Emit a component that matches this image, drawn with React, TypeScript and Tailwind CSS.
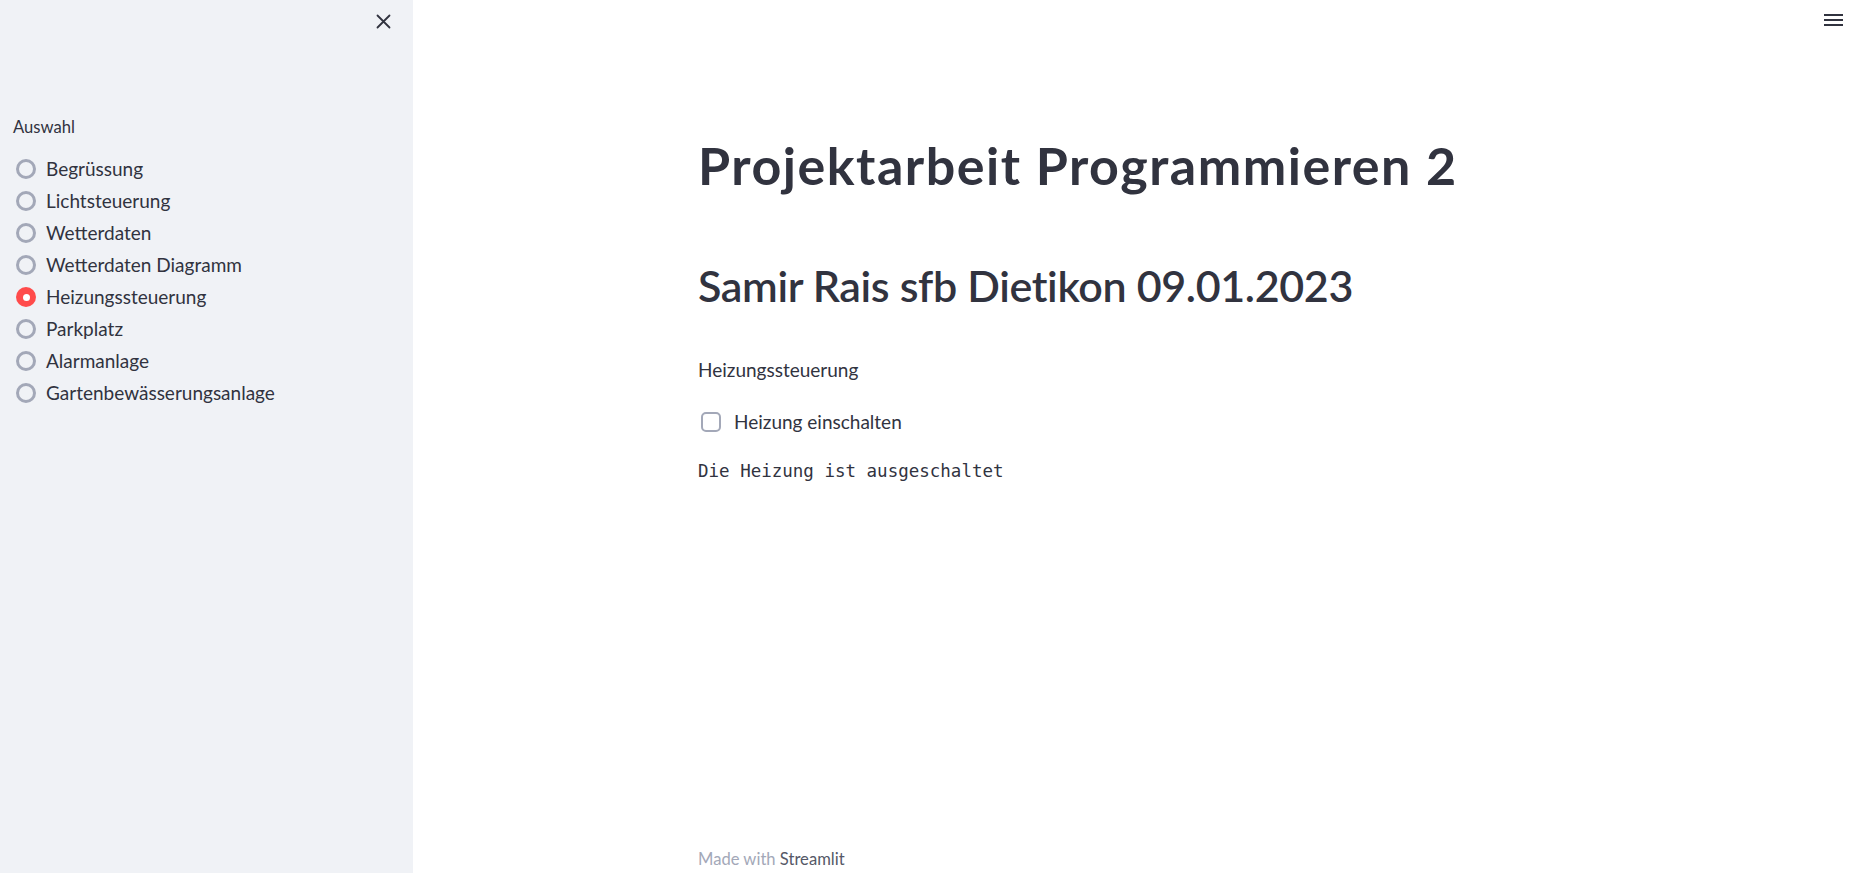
import { useState } from "react"

const OPTIONS = [
  "Begrüssung",
  "Lichtsteuerung",
  "Wetterdaten",
  "Wetterdaten Diagramm",
  "Heizungssteuerung",
  "Parkplatz",
  "Alarmanlage",
  "Gartenbewässerungsanlage",
]

const SANS = "font-['Lato','Noto_Sans',sans-serif]"

function RadioRow({ label, selected, onSelect }: { label: string; selected: boolean; onSelect: () => void }) {
  return (
    <button type="button" onClick={onSelect} className="flex h-[32px] items-center text-left">
      {selected ? (
        <span className="ml-[16px] flex h-[20px] w-[20px] items-center justify-center rounded-full bg-[#ff4b4b]">
          <span className="h-[7px] w-[7px] rounded-full bg-white" />
        </span>
      ) : (
        <span className="ml-[16px] h-[20px] w-[20px] rounded-full border-[3px] border-[#a3a8b8] bg-[#f0f2f6]" />
      )}
      <span className="ml-[10px] text-[19px] leading-[24px] text-[#31333f]">{label}</span>
    </button>
  )
}

export default function App() {
  const [page, setPage] = useState("Heizungssteuerung")
  const [heating, setHeating] = useState(false)

  return (
    <div className={`flex h-[873px] w-full overflow-hidden bg-white ${SANS}`}>
      <aside className="flex w-[413px] shrink-0 flex-col bg-[#f0f2f6]">
        <div className="flex justify-end pr-[22px] pt-[14px]">
          <svg width="15" height="15" viewBox="0 0 15 15" fill="none" stroke="#31333f" strokeWidth="1.8" strokeLinecap="round">
            <path d="M1.5 1.5 L13.5 13.5 M13.5 1.5 L1.5 13.5" />
          </svg>
        </div>
        <div className="mt-[88px] pl-[13px] text-[16.6px] leading-[20px] text-[#31333f]">Auswahl</div>
        <div className="mt-[16px] flex flex-col">
          {OPTIONS.map((o) => (
            <RadioRow key={o} label={o} selected={o === page} onSelect={() => setPage(o)} />
          ))}
        </div>
      </aside>

      <main className="relative flex flex-1 flex-col">
        <div className="absolute right-[18px] top-[14px] flex w-[19px] flex-col gap-[3px]">
          <span className="h-[2px] bg-[#31333f]" />
          <span className="h-[2px] bg-[#31333f]" />
          <span className="h-[2px] bg-[#31333f]" />
        </div>
        <div className="mx-auto flex w-[878px] flex-1 flex-col text-[#31333f]">
          <h1 className="mt-[134px] text-[52px] font-bold leading-[62px] tracking-[1.5px]">
            Projektarbeit Programmieren 2
          </h1>
          <h2 className="mt-[64px] text-[43px] font-semibold leading-[52px] tracking-[-0.35px]">
            Samir Rais sfb Dietikon 09.01.2023
          </h2>
          <p className="mt-[46px] text-[19px] leading-[23px]">Heizungssteuerung</p>
          <label className="mt-[29px] flex h-[24px] cursor-pointer items-center">
            <span
              onClick={() => setHeating(!heating)}
              className={`ml-[3px] h-[20px] w-[20px] rounded-[5px] border-2 ${heating ? "border-[#ff4b4b] bg-[#ff4b4b]" : "border-[#a3a8b8] bg-white"}`}
            />
            <span className="ml-[13px] text-[19px] text-[#31333f]">Heizung einschalten</span>
          </label>
          <pre className="mt-[26px] font-['DejaVu_Sans_Mono',monospace] text-[17.5px] leading-[22px]">
            {heating ? "Die Heizung ist eingeschaltet" : "Die Heizung ist ausgeschaltet"}
          </pre>
          <div className="mt-auto pb-[4px] text-[16.6px] leading-[20px]">
            <span className="text-[#a3a8b8]">Made with </span>
            <span className="text-[#555867]">Streamlit</span>
          </div>
        </div>
      </main>
    </div>
  )
}
